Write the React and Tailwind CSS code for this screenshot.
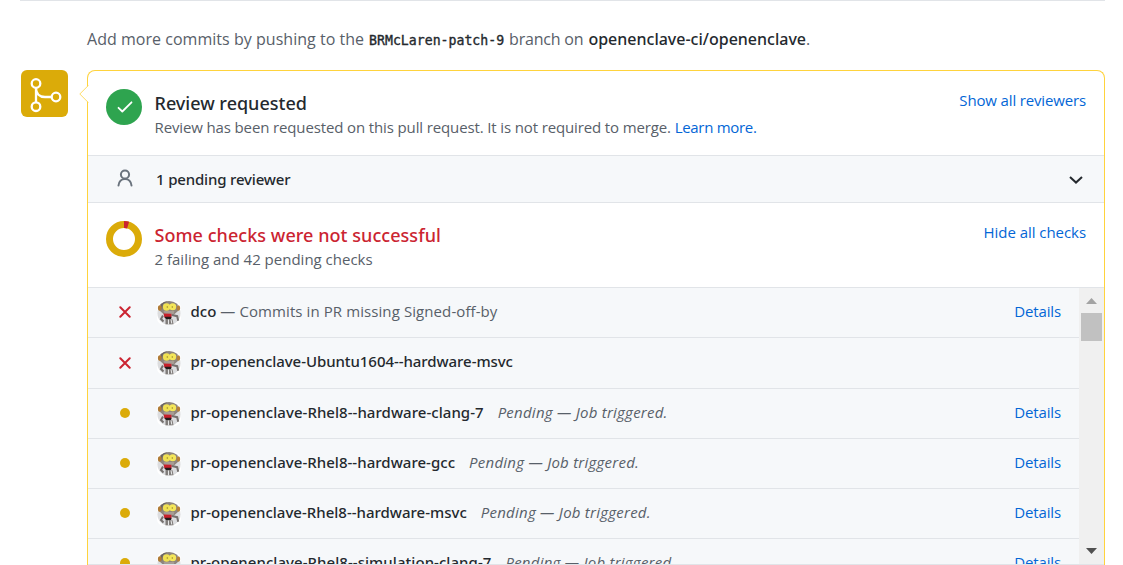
import React from "react";

const OPEN = "font-['Open_Sans','Liberation_Sans',sans-serif]";

const checks = [
  { state: "failed", name: "dco", note: "— Commits in PR missing Signed-off-by", details: true, size: "h-[50px]", spacing: "tracking-normal" },
  { state: "failed", name: "pr-openenclave-Ubuntu1604--hardware-msvc", size: "h-[51px]", spacing: "tracking-[-0.060px]" },
  { state: "pending", name: "pr-openenclave-Rhel8--hardware-clang-7", details: true, size: "h-[50px]", spacing: "tracking-[0.040px]" },
  { state: "pending", name: "pr-openenclave-Rhel8--hardware-gcc", details: true, size: "h-[50px]", spacing: "tracking-[0.030px]" },
  { state: "pending", name: "pr-openenclave-Rhel8--hardware-msvc", details: true, size: "h-[50px]", spacing: "tracking-normal" },
  { state: "pending", name: "pr-openenclave-Rhel8--simulation-clang-7", details: true, size: "h-[50px]", spacing: "tracking-[0.050px]" },
];

function MergeIcon() {
  return (
    <svg viewBox="0 0 47 47" className="h-[47px] w-[47px]" fill="none" stroke="#fff" strokeWidth="2.300">
      <circle cx="15" cy="13.500" r="4.300" />
      <circle cx="15" cy="36.700" r="4.300" />
      <circle cx="35" cy="27" r="4.300" />
      <path d="M15 18v14.400M15 18c0 5.500 3.500 9 9 9h6.700" />
    </svg>
  );
}

function Avatar() {
  return (
    <svg viewBox="0 0 24 24" className="h-6 w-6 shrink-0">
      <defs>
        <clipPath id="avatar-round">
          <rect width="24" height="24" rx="7" />
        </clipPath>
      </defs>
      <g clipPath="url(#avatar-round)">
        <rect width="24" height="24" fill="#fff" />
        <circle cx="12" cy="12.200" r="11.600" fill="#dcdddf" />
        <path d="M3.500 3Q12-3 20.500 3L21.500 9.500 17 13.500H7L2.500 9.500z" fill="#8d847d" />
        <path d="M3.500 3.500Q7 .2 11 .3L6 3 5 9z" fill="#6b6462" />
        <ellipse cx="2.800" cy="7" rx="1.900" ry="2.800" fill="#b07b35" />
        <ellipse cx="21.400" cy="7" rx="1.800" ry="2.700" fill="#b5803a" />
        <path d="M6.500 10h11l-1.500 5H8.500z" fill="#a79d95" />
        <circle cx="9.600" cy="6" r="3.700" fill="#efe052" />
        <circle cx="15.700" cy="5.700" r="3.500" fill="#f4e65a" />
        <circle cx="10.300" cy="6" r=".7" fill="#94832a" />
        <circle cx="15.300" cy="6" r=".7" fill="#94832a" />
        <path d="M6.500 12.500l8 .3v4H7.500z" fill="#c8202b" />
        <path d="M7.500 15.800h7l-.5 2.700H9z" fill="#231d1d" />
        <path d="M15 14l5.200 1.200 1 4.500M6 14.500L4 18l2.500 2.500" stroke="#75706e" strokeWidth="2" fill="none" />
        <path d="M8.500 18.300h7l1 5H8.500z" fill="#7f7b79" />
        <path d="M11.500 18.500v5M14 18.500l.8 4" stroke="#e8e8e8" strokeWidth="1.100" />
      </g>
    </svg>
  );
}

function StatusMark({ state }) {
  if (state === "failed") {
    return (
      <svg viewBox="0 0 12 12" className="h-3 w-3" fill="none" stroke="#cb2431" strokeWidth="2" strokeLinecap="round">
        <path d="M1.300 1.300l9.400 9.400M10.700 1.300L1.300 10.700" />
      </svg>
    );
  }
  return <span className="h-[10px] w-[10px] rounded-full bg-[#dbab09]" />;
}

function CheckRow({ check }) {
  return (
    <div className={`flex shrink-0 items-center border-b border-[#e1e4e8] pr-[18px] pl-[18px] ${check.size}`}>
      <div className="flex w-[37px] justify-center pb-px">
        <StatusMark state={check.state} />
      </div>
      <div className="ml-[14px] flex">
        <Avatar />
      </div>
      <div className="ml-[9.500px] flex items-center whitespace-pre pb-1 text-[15px] leading-6">
        <span className={`font-['Noto_Sans','Liberation_Sans',sans-serif] font-medium text-[#24292e] ${check.spacing}`}>{check.name}</span>
        {check.note && <span className="ml-1 tracking-[0.09px] text-[#586069]">{check.note}</span>}
        {check.state === "pending" && (
          <span className="ml-[14px] tracking-[0.240px] text-[#586069] italic">Pending — Job triggered.</span>
        )}
      </div>
      {check.details && (
        <a className="ml-auto pb-1 text-[15px] leading-6 tracking-[-0.120px] text-[#0366d6]">Details</a>
      )}
    </div>
  );
}

export default function App() {
  return (
    <div className={`h-[565px] w-[1123px] overflow-hidden bg-white ${OPEN} text-[#586069]`}>
      <div className="ml-5 flex h-full w-[1085px] flex-col border-t border-[#e1e4e8]">
        <p className="ml-[67px] flex h-[69px] shrink-0 items-baseline pt-[26px] text-base leading-6 whitespace-pre">
          <span className="tracking-[0.030px]">Add more commits by pushing to the</span>
          <code className="ml-[5px] font-['DejaVu_Sans_Mono',monospace] text-[13.200px] text-[#24292e] [-webkit-text-stroke:0.35px_#24292e]">BRMcLaren-patch-9</code>
          <span className="ml-[5px] tracking-[-0.200px]">branch on</span>
          <span className="ml-[5px] font-['Noto_Sans','Liberation_Sans',sans-serif] font-medium text-[#24292e]">openenclave-ci/openenclave</span>
          <span>.</span>
        </p>

        <div className="flex min-h-0 flex-1">
          <div className="ml-px h-[47px] w-[47px] shrink-0 rounded-md bg-[#dbab09]">
            <MergeIcon />
          </div>

          <div className="relative ml-[19px] flex w-[1018px] flex-col rounded-t-lg border-x border-t border-[#ffd33d]">
            <svg viewBox="0 0 10 18" className="absolute top-[14px] -left-[9.500px] h-[18px] w-[10px]">
              <path d="M10 0v18L.8 9z" fill="#fff" />
              <path d="M9.300.5L.8 9l8.500 8.500" fill="none" stroke="#ffdc66" />
            </svg>

            <section className="flex h-[85px] shrink-0 border-b border-[#e1e4e8] pl-[18px] pr-[18px]">
              <div className="mt-[18px] flex h-9 w-9 items-center justify-center rounded-full bg-[#2ea44f]">
                <svg viewBox="0 0 16 12" className="ml-px h-3 w-4" fill="none" stroke="#fff" strokeWidth="1.800" strokeLinecap="round" strokeLinejoin="round">
                  <path d="M1.500 6.800L5.300 10.500 14.500 1.300" />
                </svg>
              </div>
              <div className="ml-[12.500px] pt-5">
                <h3 className="font-['Noto_Sans','Liberation_Sans',sans-serif] text-lg leading-6 font-medium text-[#24292e]">Review requested</h3>
                <p className="text-[15px] leading-6 tracking-[-0.130px] whitespace-pre">
                  Review has been requested on this pull request. It is not required to merge. <a className="tracking-[-0.300px] text-[#0366d6]">Learn more.</a>
                </p>
              </div>
              <a className="mt-[17px] ml-auto text-[15px] leading-6 tracking-[-0.150px] text-[#0366d6]">Show all reviewers</a>
            </section>

            <section className="flex h-[47px] shrink-0 items-center border-b border-[#e1e4e8] bg-[#f6f8fa] pl-[18px] pr-[21px]">
              <div className="flex w-[37px] justify-center pb-[3px]">
                <svg viewBox="0 0 16 18" className="h-[18px] w-4" fill="none" stroke="#6a737d" strokeWidth="2" strokeLinecap="round">
                  <circle cx="8" cy="5.500" r="4.100" />
                  <path d="M1.500 16.500c.3-4 3-6.500 6.500-6.500s6.200 2.500 6.500 6.500" />
                </svg>
              </div>
              <span className="ml-[13px] font-['Noto_Sans','Liberation_Sans',sans-serif] text-[15px] leading-6 font-medium tracking-[-0.170px] text-[#24292e]">1 pending reviewer</span>
              <svg viewBox="0 0 14 8" className="mt-[2px] ml-auto h-2 w-[14px]" fill="none" stroke="#24292e" strokeWidth="2">
                <path d="M1 1l6 5.600L13 1" />
              </svg>
            </section>

            <section className="flex h-[85px] shrink-0 border-b border-[#e1e4e8] pl-[18px] pr-[18px]">
              <svg viewBox="0 0 36 36" className="mt-[18px] h-9 w-9" fill="none" strokeWidth="7">
                <circle cx="18" cy="18" r="14.500" stroke="#dbab09" />
                <path d="M18 3.500a14.500 14.500 0 0 1 4.100.6" stroke="#cb2431" />
              </svg>
              <div className="ml-[12.500px] pt-5">
                <h3 className="font-['Noto_Sans','Liberation_Sans',sans-serif] text-lg leading-6 font-medium tracking-[0.050px] text-[#cb2431]">Some checks were not successful</h3>
                <p className="text-[15px] leading-6">2 failing and 42 pending checks</p>
              </div>
              <a className="mt-[17px] ml-auto text-[15px] leading-6 tracking-[-0.050px] text-[#0366d6]">Hide all checks</a>
            </section>

            <section className="flex min-h-0 flex-1 border-b border-[#e1e4e8] bg-[#f6f8fa]">
              <div className="flex min-w-0 flex-1 flex-col overflow-hidden">
                {checks.map((check) => (
                  <CheckRow key={check.name} check={check} />
                ))}
              </div>
              <div className="flex w-[25px] shrink-0 flex-col items-center bg-[#f0f0f0] pt-[10px] pb-[10px]">
                <svg viewBox="0 0 11 6" className="h-[6px] w-[11px]"><path d="M5.500 0L11 6H0z" fill="#a3a3a3" /></svg>
                <div className="mt-[9px] h-7 w-[21px] bg-[#c1c1c1]" />
                <svg viewBox="0 0 11 6" className="mt-auto h-[6px] w-[11px]"><path d="M0 0h11L5.500 6z" fill="#505050" /></svg>
              </div>
            </section>
          </div>
        </div>
      </div>
    </div>
  );
}
